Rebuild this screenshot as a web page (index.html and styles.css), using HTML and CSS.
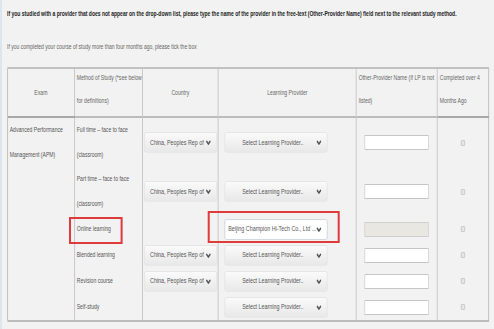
FILE: index.html
```html
<!DOCTYPE html>
<html lang="en">
<head>
  <meta charset="UTF-8">
  <meta name="viewport" content="width=device-width, initial-scale=1.0">
  <title>Study Method Details</title>
  <link rel="stylesheet" href="styles.css">
</head>
<body>
  <div class="page">
    <p class="note-strong">If you studied with a provider that does not appear on the drop-down list, please type the name of the provider in the free-text (Other-Provider Name) field next to the relevant study method.</p>
    <p class="note">If you completed your course of study more than four months ago, please tick the box</p>

    <table class="study">
      <colgroup>
        <col class="col-exam">
        <col class="col-method">
        <col class="col-country">
        <col class="col-provider">
        <col class="col-other">
        <col class="col-done">
      </colgroup>
      <thead>
        <tr>
          <th class="center">Exam</th>
          <th><div class="two-line">Method of Study (*see below<br>for definitions)</div></th>
          <th class="center">Country</th>
          <th class="center">Learning Provider</th>
          <th><div class="two-line">Other-Provider Name (If LP is not<br>listed)</div></th>
          <th><div class="two-line">Completed over 4<br>Months Ago</div></th>
        </tr>
      </thead>
      <tbody>
        <tr>
          <td rowspan="6" class="exam">Advanced Performance<br>Management (APM)</td>
          <td>Full time &ndash; face to face<br>(classroom)</td>
          <td><div class="select country"><span>China, Peoples Rep of</span><svg viewBox="0 0 8 5"><polyline points="1,1 4,4 7,1"/></svg></div></td>
          <td><div class="select provider"><span>Select Learning Provider..</span><svg viewBox="0 0 8 5"><polyline points="1,1 4,4 7,1"/></svg></div></td>
          <td><input class="other" type="text"></td>
          <td><input class="tick" type="checkbox"></td>
        </tr>
        <tr>
          <td>Part time &ndash; face to face<br>(classroom)</td>
          <td><div class="select country"><span>China, Peoples Rep of</span><svg viewBox="0 0 8 5"><polyline points="1,1 4,4 7,1"/></svg></div></td>
          <td><div class="select provider"><span>Select Learning Provider..</span><svg viewBox="0 0 8 5"><polyline points="1,1 4,4 7,1"/></svg></div></td>
          <td><input class="other" type="text"></td>
          <td><input class="tick" type="checkbox"></td>
        </tr>
        <tr>
          <td class="marked">Online learning<span class="mark mark-method"></span></td>
          <td></td>
          <td class="marked"><div class="select provider chosen"><span>Beijing Champion Hi-Tech Co., Ltd ...</span><svg viewBox="0 0 8 5"><polyline points="1,1 4,4 7,1"/></svg></div><span class="mark mark-provider"></span></td>
          <td><input class="other" type="text" disabled></td>
          <td><input class="tick" type="checkbox"></td>
        </tr>
        <tr>
          <td>Blended learning</td>
          <td><div class="select country"><span>China, Peoples Rep of</span><svg viewBox="0 0 8 5"><polyline points="1,1 4,4 7,1"/></svg></div></td>
          <td><div class="select provider"><span>Select Learning Provider..</span><svg viewBox="0 0 8 5"><polyline points="1,1 4,4 7,1"/></svg></div></td>
          <td><input class="other" type="text"></td>
          <td><input class="tick" type="checkbox"></td>
        </tr>
        <tr>
          <td>Revision course</td>
          <td><div class="select country"><span>China, Peoples Rep of</span><svg viewBox="0 0 8 5"><polyline points="1,1 4,4 7,1"/></svg></div></td>
          <td><div class="select provider"><span>Select Learning Provider..</span><svg viewBox="0 0 8 5"><polyline points="1,1 4,4 7,1"/></svg></div></td>
          <td><input class="other" type="text"></td>
          <td><input class="tick" type="checkbox"></td>
        </tr>
        <tr>
          <td>Self-study</td>
          <td></td>
          <td><div class="select provider"><span>Select Learning Provider..</span><svg viewBox="0 0 8 5"><polyline points="1,1 4,4 7,1"/></svg></div></td>
          <td><input class="other" type="text"></td>
          <td><input class="tick" type="checkbox"></td>
        </tr>
      </tbody>
    </table>
  </div>
</body>
</html>
```

FILE: styles.css
```css
html, body {
  margin: 0;
  padding: 0;
  background-color: #f2f2f2;
  overflow: hidden;
}
body {
  font-family: "Liberation Sans", Arial, sans-serif;
  color: #555;
}
/* the whole form is drawn narrow, like the squeezed screenshot */
.page {
  width: 730px;
  height: 329px;
  box-sizing: border-box;
  padding: 8px 0 0 7.5px;
  border-left: 3px solid #dce6f0;
  transform: scaleX(0.67);
  transform-origin: 0 0;
}
.note-strong {
  margin: 0;
  font-size: 7.5px;
  line-height: 12px;
  font-weight: bold;
  color: #222;
  white-space: nowrap;
}
.note {
  margin: 21px 0 0;
  font-size: 7.5px;
  line-height: 12px;
  color: #666;
  white-space: nowrap;
}
.study {
  margin-top: 14px;
  width: 719px;
  table-layout: fixed;
  border-collapse: collapse;
  border-top: 2px solid #c2c2c2;
  border-bottom: 2px solid #bcbcbc;
}
.col-exam { width: 100px; }
.col-method { width: 101.5px; }
.col-country { width: 113.4px; }
.col-provider { width: 206px; }
.col-other { width: 120.9px; }
.col-done { width: 77.2px; }

.study th,
.study td {
  padding: 0 3px;
  border-left: 1px solid #b5b5b5;
  border-right: 1px solid #b5b5b5;
  white-space: nowrap;
  vertical-align: middle;
  text-align: left;
}
.study th:first-child,
.study td.exam,
.study th:last-child,
.study td:last-child {
  border-color: #a8a8a8;
}
.study th {
  height: 47px;
  font-weight: normal;
  font-size: 7.6px;
  color: #666;
  border-bottom: 2px solid #bcbcbc;
}
.study th.center {
  text-align: center;
}
.two-line {
  line-height: 23.4px;
  margin-top: -7px;
}
.study td {
  font-size: 7.6px;
  line-height: 24.5px;
}
.study td.exam {
  vertical-align: top;
  border-right-color: #b5b5b5;
}
.study th:first-child {
  border-right-color: #b5b5b5;
}
.study th:last-child,
.study td:last-child {
  border-left-color: #b5b5b5;
}
.study td.marked {
  position: relative;
}

.select {
  display: flex;
  align-items: center;
  height: 21px;
  box-sizing: border-box;
  margin: 2.5px 0;
  padding: 0 8px 0 6px;
  background: linear-gradient(#fafafa, #e8e8e8);
  border: 1px solid #e4e4e4;
  border-radius: 3px;
  font-size: 8px;
  line-height: 1;
  color: #555;
}
.select span {
  flex: 1;
  text-align: center;
  overflow: hidden;
}
.select svg {
  width: 8px;
  height: 5px;
  fill: none;
  stroke: #555;
  stroke-width: 1.8;
}
.country {
  width: 109px;
  margin-left: -1.5px;
}
.provider {
  width: 153.7px;
  margin-left: 6px;
}
.chosen {
  background: #fff;
  border-color: #c8d2de;
  padding-left: 4px;
}

.other {
  display: block;
  width: 95.5px;
  height: 15px;
  box-sizing: border-box;
  margin: 0 0 0 9px;
  padding: 0;
  background: #fff;
  border: 1px solid #c6c6c6;
}
.other:disabled {
  background: #e8e7e1;
  border-color: #cfcfcf;
}
.tick {
  appearance: none;
  display: block;
  width: 6px;
  height: 6px;
  box-sizing: border-box;
  margin: 0 auto;
  background: #e6e6e6;
  border: 1px solid #c4c4c4;
  border-radius: 1px;
}

.mark {
  position: absolute;
  box-sizing: border-box;
  border: 2px solid #df3a3c;
  border-left-width: 3px;
  border-right-width: 3px;
}
.mark-method {
  left: -9px;
  top: 1px;
  width: 80.6px;
  height: 27px;
}
.mark-provider {
  left: -16.4px;
  top: -5px;
  width: 197px;
  height: 32px;
}
```
